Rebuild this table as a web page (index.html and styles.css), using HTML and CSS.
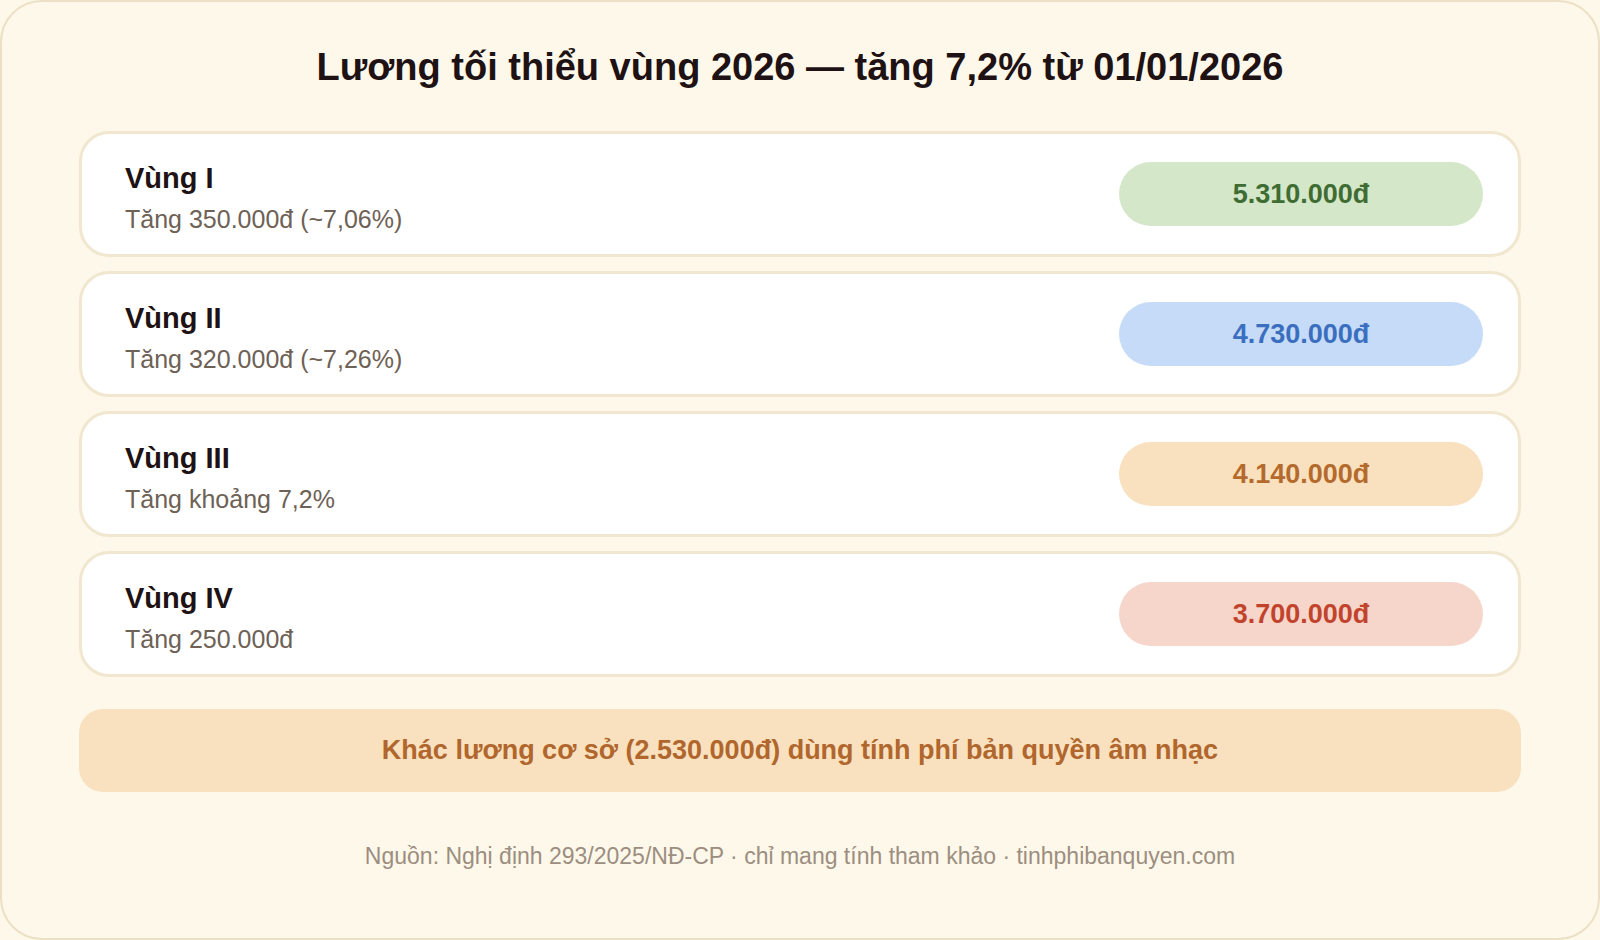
FILE: index.html
```html
<!DOCTYPE html>
<html lang="vi">
<head>
<meta charset="utf-8">
<title>Lương tối thiểu vùng 2026</title>
<link rel="stylesheet" href="styles.css">
</head>
<body>
<div class="card">
  <h1 class="title">Lương tối thiểu vùng 2026 — tăng 7,2% từ 01/01/2026</h1>
  <div class="rows">
    <div class="row">
      <div class="info">
        <div class="name">Vùng I</div>
        <div class="sub">Tăng 350.000đ (~7,06%)</div>
      </div>
      <div class="pill pill-green">5.310.000đ</div>
    </div>
    <div class="row">
      <div class="info">
        <div class="name">Vùng II</div>
        <div class="sub">Tăng 320.000đ (~7,26%)</div>
      </div>
      <div class="pill pill-blue">4.730.000đ</div>
    </div>
    <div class="row">
      <div class="info">
        <div class="name">Vùng III</div>
        <div class="sub">Tăng khoảng 7,2%</div>
      </div>
      <div class="pill pill-orange">4.140.000đ</div>
    </div>
    <div class="row">
      <div class="info">
        <div class="name">Vùng IV</div>
        <div class="sub">Tăng 250.000đ</div>
      </div>
      <div class="pill pill-red">3.700.000đ</div>
    </div>
  </div>
  <div class="note">Khác lương cơ sở (2.530.000đ) dùng tính phí bản quyền âm nhạc</div>
  <div class="footer">Nguồn: Nghị định 293/2025/NĐ-CP · chỉ mang tính tham khảo · tinhphibanquyen.com</div>
</div>
</body>
</html>
```

FILE: styles.css
```css
html, body {
  margin: 0;
  padding: 0;
  background: #fdf8ea;
}

body {
  font-family: "Liberation Sans", Arial, "Helvetica Neue", sans-serif;
  width: 1600px;
  height: 940px;
}

.card {
  box-sizing: border-box;
  width: 1600px;
  height: 940px;
  border: 2px solid #ece0c4;
  border-radius: 42px;
  background: #fdf8ea;
  padding: 43px 77px 0 77px;
  display: flex;
  flex-direction: column;
}

.title {
  margin: 0;
  font-size: 38px;
  line-height: 44px;
  font-weight: 700;
  color: #1e1214;
  text-align: center;
}

.rows {
  margin-top: 42px;
  display: flex;
  flex-direction: column;
  gap: 14px;
}

.row {
  box-sizing: border-box;
  height: 126px;
  background: #ffffff;
  border: 3px solid #f1e6cf;
  border-radius: 30px;
  padding: 0 35px 0 43px;
  display: flex;
  align-items: center;
  justify-content: space-between;
}

.info {
  display: flex;
  flex-direction: column;
  gap: 9px;
  padding-top: 6px;
}

.name {
  font-size: 29px;
  line-height: 34px;
  font-weight: 700;
  color: #1e1214;
}

.sub {
  font-size: 25px;
  line-height: 30px;
  color: #6e6155;
}

.pill {
  width: 364px;
  height: 64px;
  border-radius: 32px;
  display: flex;
  align-items: center;
  justify-content: center;
  font-size: 27px;
  font-weight: 700;
}

.pill-green { background: #d4e7c9; color: #3f6c33; }
.pill-blue { background: #c6dbf7; color: #3a6ebf; }
.pill-orange { background: #f9e1bf; color: #b46a2c; }
.pill-red { background: #f6d5ca; color: #c2432c; }

.note {
  margin-top: 32px;
  height: 83px;
  border-radius: 24px;
  background: #f9e1bf;
  color: #b0662c;
  font-size: 27px;
  font-weight: 700;
  display: flex;
  align-items: center;
  justify-content: center;
}

.footer {
  margin-top: 50px;
  font-size: 23px;
  line-height: 28px;
  color: #9c8e80;
  text-align: center;
}
```
